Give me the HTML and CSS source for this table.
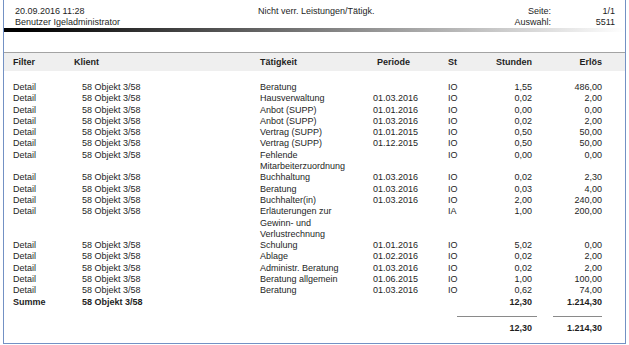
FILE: index.html
```html
<!DOCTYPE html>
<html lang="de">
<head>
  <meta charset="UTF-8" />
  <meta name="viewport" content="width=device-width, initial-scale=1.0"/>
  <title>Nicht verr. Leistungen/Tätigk.</title>
  <link rel="stylesheet" href="styles.css">
</head>
<body>
  <div class="report">
    <div class="report-head">
      <div>20.09.2016 11:28</div>
      <div class="title">Nicht verr. Leistungen/Tätigk.</div>
      <div class="label">Seite:</div>
      <div class="value">1/1</div>
      <div>Benutzer Igeladministrator</div>
      <div></div>
      <div class="label">Auswahl:</div>
      <div class="value">5511</div>
    </div>
    <div class="fade-bar"></div>

    <table class="report-table">
      <colgroup>
        <col class="c-filter">
        <col class="c-klient">
        <col class="c-taet">
        <col class="c-periode">
        <col class="c-st">
        <col class="c-std">
        <col class="c-erl">
        <col>
      </colgroup>
      <thead>
        <tr>
          <th class="first">Filter</th>
          <th>Klient</th>
          <th>Tätigkeit</th>
          <th class="periode">Periode</th>
          <th>St</th>
          <th class="num">Stunden</th>
          <th class="num">Erlös</th>
          <th></th>
        </tr>
      </thead>
      <tbody>
        <tr><td class="first">Detail</td><td class="indent">58 Objekt 3/58</td><td class="taet">Beratung</td><td></td><td>IO</td><td class="num">1,55</td><td class="num">486,00</td><td></td></tr>
        <tr><td class="first">Detail</td><td class="indent">58 Objekt 3/58</td><td class="taet">Hausverwaltung</td><td>01.03.2016</td><td>IO</td><td class="num">0,02</td><td class="num">2,00</td><td></td></tr>
        <tr><td class="first">Detail</td><td class="indent">58 Objekt 3/58</td><td class="taet">Anbot (SUPP)</td><td>01.01.2016</td><td>IO</td><td class="num">0,00</td><td class="num">0,00</td><td></td></tr>
        <tr><td class="first">Detail</td><td class="indent">58 Objekt 3/58</td><td class="taet">Anbot (SUPP)</td><td>01.03.2016</td><td>IO</td><td class="num">0,02</td><td class="num">2,00</td><td></td></tr>
        <tr><td class="first">Detail</td><td class="indent">58 Objekt 3/58</td><td class="taet">Vertrag (SUPP)</td><td>01.01.2015</td><td>IO</td><td class="num">0,50</td><td class="num">50,00</td><td></td></tr>
        <tr><td class="first">Detail</td><td class="indent">58 Objekt 3/58</td><td class="taet">Vertrag (SUPP)</td><td>01.12.2015</td><td>IO</td><td class="num">0,50</td><td class="num">50,00</td><td></td></tr>
        <tr><td class="first">Detail</td><td class="indent">58 Objekt 3/58</td><td class="taet">Fehlende Mitarbeiterzuordnung</td><td></td><td>IO</td><td class="num">0,00</td><td class="num">0,00</td><td></td></tr>
        <tr><td class="first">Detail</td><td class="indent">58 Objekt 3/58</td><td class="taet">Buchhaltung</td><td>01.03.2016</td><td>IO</td><td class="num">0,02</td><td class="num">2,30</td><td></td></tr>
        <tr><td class="first">Detail</td><td class="indent">58 Objekt 3/58</td><td class="taet">Beratung</td><td>01.03.2016</td><td>IO</td><td class="num">0,03</td><td class="num">4,00</td><td></td></tr>
        <tr><td class="first">Detail</td><td class="indent">58 Objekt 3/58</td><td class="taet">Buchhalter(in)</td><td>01.03.2016</td><td>IO</td><td class="num">2,00</td><td class="num">240,00</td><td></td></tr>
        <tr><td class="first">Detail</td><td class="indent">58 Objekt 3/58</td><td class="taet">Erläuterungen zur Gewinn- und Verlustrechnung</td><td></td><td>IA</td><td class="num">1,00</td><td class="num">200,00</td><td></td></tr>
        <tr><td class="first">Detail</td><td class="indent">58 Objekt 3/58</td><td class="taet">Schulung</td><td>01.01.2016</td><td>IO</td><td class="num">5,02</td><td class="num">0,00</td><td></td></tr>
        <tr><td class="first">Detail</td><td class="indent">58 Objekt 3/58</td><td class="taet">Ablage</td><td>01.02.2016</td><td>IO</td><td class="num">0,02</td><td class="num">2,00</td><td></td></tr>
        <tr><td class="first">Detail</td><td class="indent">58 Objekt 3/58</td><td class="taet">Administr. Beratung</td><td>01.03.2016</td><td>IO</td><td class="num">0,02</td><td class="num">2,00</td><td></td></tr>
        <tr><td class="first">Detail</td><td class="indent">58 Objekt 3/58</td><td class="taet">Beratung allgemein</td><td>01.06.2015</td><td>IO</td><td class="num">1,00</td><td class="num">100,00</td><td></td></tr>
        <tr><td class="first">Detail</td><td class="indent">58 Objekt 3/58</td><td class="taet">Beratung</td><td>01.03.2016</td><td>IO</td><td class="num">0,62</td><td class="num">74,00</td><td></td></tr>
        <tr class="sum"><td class="first">Summe</td><td class="indent">58 Objekt 3/58</td><td class="taet"></td><td></td><td></td><td class="num">12,30</td><td class="num">1.214,30</td><td></td></tr>
      </tbody>
    </table>

    <div class="grand-total">
      <div class="total-cell hours">12,30</div>
      <div class="total-cell amount">1.214,30</div>
    </div>
  </div>
</body>
</html>
```

FILE: styles.css
```css
body {
  margin: 0;
  background: #fff;
  font-family: "Liberation Sans", Arial, sans-serif;
  font-size: 9px;
  color: #1e1e1e;
}
.report {
  margin-left: 3px;
  width: 621px;
  height: 343px;
  border-left: 1px solid #7391c4;
  border-right: 1px solid #7391c4;
  border-bottom: 1px solid #7391c4;
}
.report-head {
  display: grid;
  grid-template-columns: 243px 1fr auto 64px;
  padding: 6px 10px 0 11px;
  line-height: 11px;
}
.report-head .label,
.report-head .value {
  text-align: right;
}
.fade-bar {
  height: 4px;
  background: linear-gradient(to right, #000 3%, #fff 100%);
}
.report-table {
  width: 100%;
  margin-top: 20px;
  border-collapse: collapse;
  table-layout: fixed;
}
.c-filter { width: 70px; }
.c-klient { width: 186px; }
.c-taet { width: 113px; }
.c-periode { width: 75px; }
.c-st { width: 22px; }
.c-std { width: 62px; }
.c-erl { width: 70px; }
th, td {
  padding: 0;
  text-align: left;
  vertical-align: top;
}
th {
  height: 18px;
  vertical-align: middle;
  font-weight: bold;
  background: #efefef;
  border-top: 1px solid #a3a3a3;
}
td {
  line-height: 11.3px;
}
tbody tr:first-child td {
  padding-top: 11px;
}
.first {
  padding-left: 9px;
}
.indent {
  padding-left: 8px;
}
td.taet {
  padding-right: 13px;
}
th.periode {
  padding-left: 4px;
}
.num {
  text-align: right;
}
th.num {
  text-align: right;
}
tr.sum td {
  font-weight: bold;
}
.grand-total {
  display: flex;
  margin-top: 8px;
  padding-left: 453px;
  font-weight: bold;
  line-height: 11.3px;
}
.total-cell {
  border-top: 1px solid #8a8a8a;
  padding-top: 6px;
  text-align: right;
}
.total-cell.hours {
  width: 75px;
  padding-right: 5px;
}
.total-cell.amount {
  width: 49px;
  margin-left: 16px;
}
```
